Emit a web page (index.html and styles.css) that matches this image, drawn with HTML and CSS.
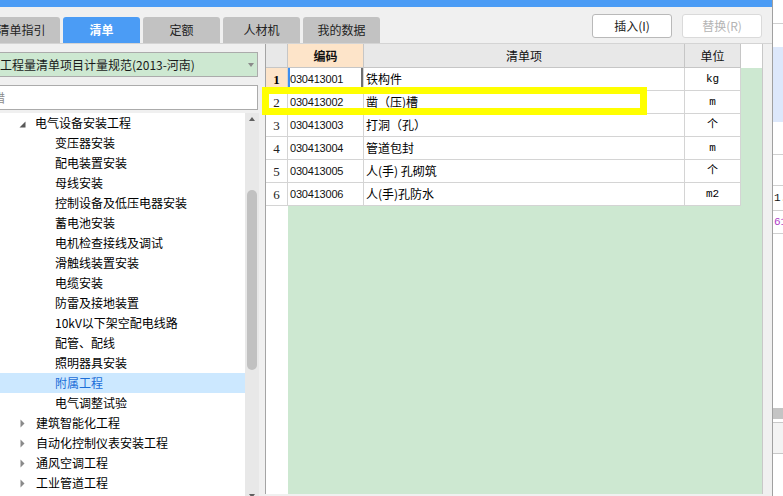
FILE: index.html
```html
<!DOCTYPE html>
<html lang="zh-CN">
<head>
<meta charset="utf-8">
<title>清单</title>
<link rel="stylesheet" href="styles.css">
</head>
<body>
<div class="screen">
  <div class="app">
    <div class="topbar"></div>
    <div class="toolbar">
      <div class="tabs">
        <div class="tab">清单指引</div>
        <div class="tab active">清单</div>
        <div class="tab">定额</div>
        <div class="tab">人材机</div>
        <div class="tab">我的数据</div>
      </div>
      <div class="actions">
        <button class="btn">插入(I)</button>
        <button class="btn disabled">替换(R)</button>
      </div>
    </div>
    <div class="main">
      <div class="left">
        <div class="select">
          <span class="select-text">工程量清单项目计量规范(2013-河南)</span>
          <span class="caret"></span>
        </div>
        <div class="search"><span>措</span></div>
        <div class="treewrap">
          <div class="tree">
            <div class="node l1"><svg class="tw" width="7" height="7" viewBox="0 0 7 7"><polygon points="6.5,0.5 6.5,6.5 0.5,6.5" fill="#595959"/></svg><span>电气设备安装工程</span></div>
            <div class="node l2">变压器安装</div>
            <div class="node l2">配电装置安装</div>
            <div class="node l2">母线安装</div>
            <div class="node l2">控制设备及低压电器安装</div>
            <div class="node l2">蓄电池安装</div>
            <div class="node l2">电机检查接线及调试</div>
            <div class="node l2">滑触线装置安装</div>
            <div class="node l2">电缆安装</div>
            <div class="node l2">防雷及接地装置</div>
            <div class="node l2">10kV以下架空配电线路</div>
            <div class="node l2">配管、配线</div>
            <div class="node l2">照明器具安装</div>
            <div class="node l2 selected">附属工程</div>
            <div class="node l2">电气调整试验</div>
            <div class="node l1"><svg class="tc" width="7" height="9" viewBox="0 0 7 9"><polygon points="0.5,0.5 4.5,4.5 0.5,8.5" fill="#8a8a8a"/></svg><span>建筑智能化工程</span></div>
            <div class="node l1"><svg class="tc" width="7" height="9" viewBox="0 0 7 9"><polygon points="0.5,0.5 4.5,4.5 0.5,8.5" fill="#8a8a8a"/></svg><span>自动化控制仪表安装工程</span></div>
            <div class="node l1"><svg class="tc" width="7" height="9" viewBox="0 0 7 9"><polygon points="0.5,0.5 4.5,4.5 0.5,8.5" fill="#8a8a8a"/></svg><span>通风空调工程</span></div>
            <div class="node l1"><svg class="tc" width="7" height="9" viewBox="0 0 7 9"><polygon points="0.5,0.5 4.5,4.5 0.5,8.5" fill="#8a8a8a"/></svg><span>工业管道工程</span></div>
          </div>
          <div class="vscroll">
            <span class="arrow-up"></span>
            <span class="thumb"></span>
            <span class="arrow-down"></span>
          </div>
        </div>
      </div>
      <div class="gridpanel">
        <div class="grid">
          <div class="rows">
            <div class="cell hd corner"></div>
            <div class="cell hd code-hd">编码</div>
            <div class="cell hd">清单项</div>
            <div class="cell hd">单位</div>
            <div class="cell hd blank"></div>

            <div class="cell num cur">1</div>
            <div class="cell code focus">030413001</div>
            <div class="cell name">铁构件</div>
            <div class="cell unit">kg</div>
            <div class="cell pad"></div>

            <div class="cell num">2</div>
            <div class="cell code">030413002</div>
            <div class="cell name">凿（压)槽</div>
            <div class="cell unit">m</div>
            <div class="cell pad"></div>

            <div class="cell num">3</div>
            <div class="cell code">030413003</div>
            <div class="cell name">打洞（孔）</div>
            <div class="cell unit">个</div>
            <div class="cell pad"></div>

            <div class="cell num">4</div>
            <div class="cell code">030413004</div>
            <div class="cell name">管道包封</div>
            <div class="cell unit">m</div>
            <div class="cell pad"></div>

            <div class="cell num">5</div>
            <div class="cell code">030413005</div>
            <div class="cell name">人(手) 孔砌筑</div>
            <div class="cell unit">个</div>
            <div class="cell pad"></div>

            <div class="cell num">6</div>
            <div class="cell code">030413006</div>
            <div class="cell name">人(手)孔防水</div>
            <div class="cell unit">m2</div>
            <div class="cell pad"></div>
          </div>
          <div class="fill">
            <div class="fill-num"></div>
          </div>
        </div>
      </div>
    </div>
  </div>
  <div class="side">
    <div class="s s1"></div>
    <div class="s s2"></div>
    <div class="s s3"></div>
    <div class="s s4"></div>
    <div class="s s5"></div>
    <div class="s s6">1.00</div>
    <div class="s s7">61</div>
    <div class="s s8"></div>
    <div class="s s9"></div>
    <div class="s s10"></div>
    <div class="s s11"></div>
  </div>
</div>
<div class="highlight"></div>
</body>
</html>
```

FILE: styles.css
```css
* { box-sizing: border-box; }
html, body { margin: 0; padding: 0; }
body {
  width: 783px;
  height: 496px;
  overflow: hidden;
  position: relative;
  background: #f0f0f0;
  font-family: "Noto Sans CJK SC", "Noto Sans", sans-serif;
  font-size: 12px;
  color: #000;
}
.screen { display: flex; width: 783px; height: 496px; }
.app { width: 772px; flex: none; display: flex; flex-direction: column; }
.topbar { height: 7px; flex: none; background: #4b9cf5; }

.toolbar {
  height: 37px;
  flex: none;
  display: flex;
  justify-content: space-between;
  border-bottom: 1px solid #d4d4d4;
}
.tabs { display: flex; gap: 3px; margin-left: -17px; padding-top: 10px; }
.tab {
  width: 77px;
  height: 26px;
  background: #c2c2c2;
  border-radius: 3px 3px 0 0;
  display: flex;
  align-items: center;
  justify-content: center;
  color: #222;
  font-size: 12px;
  line-height: 1;
}
.tab.active { background: #4b9cf5; color: #fff; font-weight: bold; }

.actions { display: flex; gap: 10px; padding-top: 7px; padding-right: 10px; }
.btn {
  width: 80px;
  height: 24px;
  background: #fff;
  border: 1px solid #b9b9b9;
  border-radius: 3px;
  font-family: "Noto Sans CJK SC", "Noto Sans", sans-serif;
  font-size: 12px;
  color: #222;
  padding: 0;
  line-height: 1;
}
.btn.disabled { border-color: #dadada; color: #b4b4b4; }

.main { flex: 1; display: flex; min-height: 0; }
.left {
  width: 265px;
  flex: none;
  display: flex;
  flex-direction: column;
  overflow: hidden;
}
.select {
  margin: 8px 0 0 -10px;
  width: 268px;
  height: 25px;
  flex: none;
  border: 1px solid #ababab;
  background: #cde8d1;
  display: flex;
  align-items: center;
  padding-left: 9px;
  color: #1a1a1a;
  white-space: nowrap;
}
.caret {
  margin-left: auto;
  margin-right: 3px;
  width: 0;
  height: 0;
  border-left: 3.5px solid transparent;
  border-right: 3.5px solid transparent;
  border-top: 4px solid #8a8a8a;
}
.search {
  margin: 8px 0 0 -10px;
  width: 268px;
  height: 25px;
  flex: none;
  border: 1px solid #ababab;
  background: #fff;
  display: flex;
  align-items: center;
  padding-left: 2px;
  color: #8c8c8c;
}
.treewrap { margin-top: 3px; flex: 1; display: flex; width: 259px; min-height: 0; }
.tree { width: 245px; background: #fff; }
.node {
  height: 20px;
  display: flex;
  align-items: center;
  white-space: nowrap;
  line-height: 1;
}
.node.l1 { padding-left: 19px; }
.node.l1 svg.tw { margin-right: 9px; margin-top: 2px; }
.node.l1 svg.tc { margin-right: 9px; margin-left: 1px; margin-top: 1px; }
.node.l2 { padding-left: 55px; }
.node.selected { background: #cce8ff; color: #1c6ed8; }

.vscroll {
  width: 14px;
  background: #e8e8e8;
  display: flex;
  flex-direction: column;
  align-items: center;
  padding-top: 4px;
}
.arrow-up {
  width: 0; height: 0;
  border-left: 3.5px solid transparent;
  border-right: 3.5px solid transparent;
  border-bottom: 4px solid #606060;
}
.thumb {
  margin-top: 69px;
  width: 10px;
  height: 180px;
  background: #c1c1c1;
  border-radius: 5px;
}
.arrow-down {
  margin-top: auto;
  margin-bottom: -2px;
  width: 0; height: 0;
  border-left: 3.5px solid transparent;
  border-right: 3.5px solid transparent;
  border-top: 4px solid #606060;
}

.gridpanel { flex: 1; }
.grid {
  width: 498px;
  height: 450px;
  border-left: 1px solid #a4a4a4;
  border-right: 1px solid #c8c8c8;
  background: #cde8d1;
  display: flex;
  flex-direction: column;
}
.rows {
  display: grid;
  grid-template-columns: 22px 76px 321px 56px 21px;
  grid-auto-rows: 23px;
  grid-template-rows: 24px;
}
.cell {
  border-right: 1px solid #d4d4d4;
  border-bottom: 1px solid #d4d4d4;
  background: #fff;
  display: flex;
  align-items: center;
  white-space: nowrap;
  overflow: hidden;
  line-height: 1;
}
.cell.hd {
  background: #e8e8e8;
  justify-content: center;
  color: #111;
  border-color: #c6c6c6;
}
.cell.hd.code-hd { background: #fde4c9; font-weight: bold; }
.cell.hd.blank { background: #fff; border: none; }
.cell.pad { background: transparent; border: none; }
.cell.num {
  justify-content: center;
  font-family: "Liberation Serif", serif;
  font-size: 13px;
  color: #222;
}
.cell.num.cur { background: #fde4c9; font-weight: bold; color: #000; }
.cell.code {
  padding-left: 2px;
  font-family: "Liberation Sans", sans-serif;
  font-size: 11px;
  letter-spacing: -0.2px;
  color: #111;
}
.cell.code.focus { box-shadow: inset 2px 0 #3d8ef0, inset -2px 0 #707070; }
.cell.name { padding-left: 2px; }
.cell.unit {
  justify-content: center;
  font-family: "Liberation Mono", "Noto Sans CJK SC", monospace;
  font-size: 11px;
}
.fill { flex: 1; display: flex; }
.fill-num { width: 22px; background: #fff; }

.side {
  flex: 1;
  border-left: 1px solid #a0a0a0;
  background: #fff;
  overflow: hidden;
  display: flex;
  flex-direction: column;
}
.s { flex: none; white-space: nowrap; font-family: "Liberation Mono", monospace; font-size: 11px; padding-left: 1px; display: flex; align-items: center; }
.s1 { height: 24px; border-bottom: 1px solid #d0d0d0; }
.s2 { height: 23px; }
.s3 { height: 75px; background: #dde8fb; }
.s4 { height: 33px; border-bottom: 1px solid #d0d0d0; }
.s5 { height: 31px; border-bottom: 1px solid #d0d0d0; }
.s6 { height: 25px; border-bottom: 1px solid #d0d0d0; color: #111; }
.s7 { height: 23px; border-bottom: 1px solid #d0d0d0; color: #b040c8; }
.s8 { height: 174px; }
.s9 { height: 11px; background: #c4c4c4; }
.s10 { height: 4px; border-bottom: 1px solid #c8c8c8; }
.s11 { height: 31px; background: #f3f3f3; border-bottom: 1px solid #c8c8c8; }

.highlight {
  position: absolute;
  left: 262px;
  top: 87px;
  width: 385px;
  height: 28px;
  border: 7px solid #ffff00;
}
```
